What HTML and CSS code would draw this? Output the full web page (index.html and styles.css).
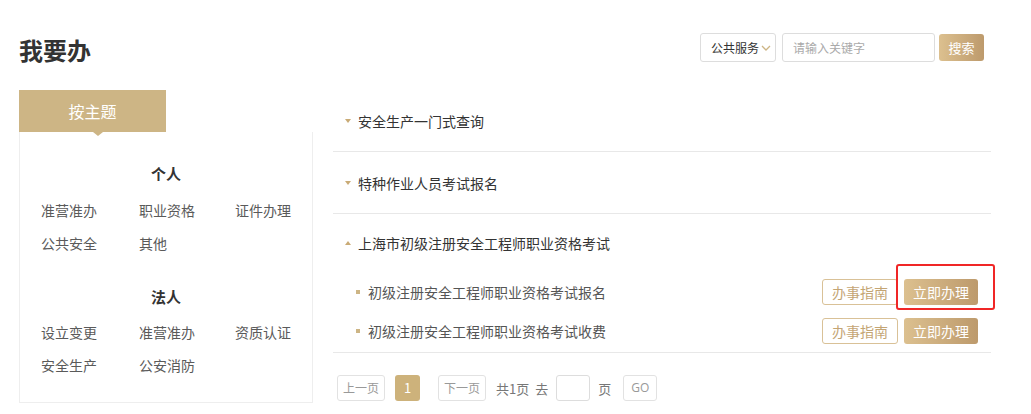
FILE: index.html
```html
<!DOCTYPE html>
<html lang="zh-CN">
<head>
    <meta charset="UTF-8">
    <meta name="viewport" content="width=device-width, initial-scale=1.0">
    <title>我要办</title>
    <link rel="stylesheet" href="styles.css">
</head>
<body>
    <div class="page">
        <div class="header">
            <h1 class="title">我要办</h1>
            <div class="search">
                <div class="search-select">
                    <span>公共服务</span>
                    <svg class="chevron" width="10" height="6" viewBox="0 0 10 6"><path d="M1 1 L5 5 L9 1" fill="none" stroke="#cdb585" stroke-width="1.3"/></svg>
                </div>
                <input class="search-input" type="text" placeholder="请输入关键字">
                <button class="search-btn">搜索</button>
            </div>
        </div>

        <div class="main">
            <div class="side">
                <div class="tabs">
                    <div class="tab active">按主题</div>
                </div>
                <div class="side-box">
                    <div class="group">
                        <div class="group-title">个人</div>
                        <div class="group-items">
                            <span>准营准办</span>
                            <span>职业资格</span>
                            <span>证件办理</span>
                            <span>公共安全</span>
                            <span>其他</span>
                        </div>
                    </div>
                    <div class="group group-second">
                        <div class="group-title">法人</div>
                        <div class="group-items">
                            <span>设立变更</span>
                            <span>准营准办</span>
                            <span>资质认证</span>
                            <span>安全生产</span>
                            <span>公安消防</span>
                        </div>
                    </div>
                </div>
            </div>

            <div class="content">
                <div class="item">
                    <div class="item-head"><span class="arrow arrow-down"></span>安全生产一门式查询</div>
                </div>
                <div class="item">
                    <div class="item-head"><span class="arrow arrow-down"></span>特种作业人员考试报名</div>
                </div>
                <div class="item open">
                    <div class="item-head item-head-open"><span class="arrow arrow-up"></span>上海市初级注册安全工程师职业资格考试</div>
                    <div class="sub-list">
                        <div class="sub-item">
                            <span class="bullet"></span>
                            <span class="sub-name">初级注册安全工程师职业资格考试报名</span>
                            <button class="btn-guide">办事指南</button>
                            <button class="btn-apply">立即办理<span class="highlight"></span></button>
                        </div>
                        <div class="sub-item">
                            <span class="bullet"></span>
                            <span class="sub-name">初级注册安全工程师职业资格考试收费</span>
                            <button class="btn-guide">办事指南</button>
                            <button class="btn-apply">立即办理</button>
                        </div>
                    </div>
                </div>

                <div class="pager">
                    <span class="pager-btn">上一页</span>
                    <span class="pager-num current">1</span>
                    <span class="pager-btn">下一页</span>
                    <span class="pager-text">共1页</span>
                    <span class="pager-text pager-goto">去</span>
                    <input class="pager-input" type="text">
                    <span class="pager-text">页</span>
                    <span class="pager-btn pager-go">GO</span>
                </div>
            </div>
        </div>
    </div>
</body>
</html>
```

FILE: styles.css
```css
* {
    box-sizing: border-box;
}

body {
    margin: 0;
    background-color: #fff;
    font-family: "Noto Sans CJK SC", "Noto Sans", sans-serif;
    color: #333;
}

.page {
    width: 991px;
    padding-left: 19px;
}

/* header */
.header {
    display: flex;
    justify-content: space-between;
    align-items: flex-start;
    height: 90px;
}

.title {
    margin: 0;
    padding-top: 36px;
    font-size: 24px;
    line-height: 28px;
    font-weight: bold;
    color: #333;
}

.search {
    display: flex;
    align-items: center;
    margin-top: 33px;
    margin-right: 7px;
}

.search-select {
    display: flex;
    align-items: center;
    justify-content: space-between;
    width: 76px;
    height: 29px;
    padding: 0 4px 0 10px;
    border: 1px solid #ddd;
    border-radius: 3px;
    font-size: 12px;
    color: #333;
    white-space: nowrap;
}

.chevron {
    margin-top: 1px;
}

.search-input {
    width: 153px;
    height: 29px;
    margin-left: 6px;
    padding: 0 10px;
    border: 1px solid #ddd;
    border-radius: 3px;
    font-family: inherit;
    font-size: 12px;
    outline: none;
}

.search-input::placeholder {
    color: #aaa;
}

.search-btn {
    width: 45px;
    height: 27px;
    margin-left: 4px;
    padding: 0;
    border: none;
    border-radius: 3px;
    background: linear-gradient(to right, #dcc08f, #bd9a6c);
    color: #fff;
    font-family: inherit;
    font-size: 13px;
}

/* main */
.main {
    display: flex;
    align-items: flex-start;
}

.side {
    width: 294px;
}

.tabs {
    display: flex;
}

.tab {
    position: relative;
    width: 147px;
    height: 42px;
    line-height: 42px;
    text-align: center;
    font-size: 16px;
    color: #fff;
    background-color: #cdb585;
}

.tab.active::after {
    content: "";
    position: absolute;
    left: 74px;
    bottom: -4px;
    border-left: 5px solid transparent;
    border-right: 5px solid transparent;
    border-top: 4px solid #cdb585;
}

.side-box {
    height: 271px;
    padding: 31px 0 0 21px;
    border: 1px solid #eee;
    border-top: none;
}

.group-title {
    margin-left: -21px;
    line-height: 22px;
    text-align: center;
    font-size: 15px;
    font-weight: bold;
    color: #333;
}

.group-items {
    display: grid;
    grid-template-columns: 98px 96px auto;
    margin-top: 9px;
    font-size: 14px;
    line-height: 33px;
    color: #5a5a5a;
}

.group-second {
    margin-top: 26px;
}

.group-second .group-items {
    margin-top: 8px;
}

/* right list */
.content {
    width: 658px;
    margin-left: 20px;
}

.item {
    border-bottom: 1px solid #e8e8e8;
}

.item-head {
    display: flex;
    align-items: center;
    height: 61px;
    padding-left: 12px;
    font-size: 14px;
    color: #333;
}

.item-head-open {
    height: 58px;
}

.arrow {
    width: 0;
    height: 0;
    margin-right: 7px;
    border-left: 3.5px solid transparent;
    border-right: 3.5px solid transparent;
}

.arrow-down {
    border-top: 4px solid #c9ab76;
}

.arrow-up {
    border-bottom: 4px solid #c9ab76;
}

.sub-list {
    padding-bottom: 2px;
}

.sub-item {
    display: flex;
    align-items: center;
    height: 39px;
    padding: 0 13px 0 23px;
}

.bullet {
    width: 4px;
    height: 4px;
    margin-right: 8px;
    background-color: #cdb585;
}

.sub-name {
    flex: 1;
    font-size: 14px;
    color: #555;
}

.btn-guide,
.btn-apply {
    height: 26px;
    padding: 0;
    border-radius: 3px;
    font-family: inherit;
    font-size: 14px;
}

.btn-guide {
    width: 76px;
    border: 1px solid #d9c197;
    background-color: #fff;
    color: #c4a574;
}

.btn-apply {
    position: relative;
    width: 74px;
    margin-left: 6px;
    border: none;
    background: linear-gradient(to right, #dcc08f, #bd9a6c);
    color: #fff;
}

/* red annotation frame */
.highlight {
    position: absolute;
    left: -8px;
    top: -15px;
    width: 99px;
    height: 46px;
    border: 2px solid #f02626;
    border-radius: 3px;
}

/* pager */
.pager {
    display: flex;
    align-items: center;
    margin-top: 22px;
    padding-left: 4px;
    font-size: 12px;
}

.pager-btn {
    width: 48px;
    height: 26px;
    line-height: 24px;
    text-align: center;
    border: 1px solid #e2e2e2;
    border-radius: 3px;
    color: #999;
}

.pager-num {
    width: 25px;
    height: 26px;
    margin: 0 18px 0 10px;
    line-height: 26px;
    text-align: center;
    border-radius: 3px;
    font-size: 13px;
}

.pager-num.current {
    background-color: #cdb27b;
    color: #fff;
}

.pager-text {
    margin-left: 10px;
    font-size: 13px;
    color: #777;
}

.pager-goto {
    margin-left: 6px;
}

.pager-input {
    width: 34px;
    height: 26px;
    margin-left: 8px;
    border: 1px solid #ddd;
    border-radius: 3px;
    outline: none;
}

.pager-input + .pager-text {
    margin-left: 8px;
}

.pager-go {
    width: 34px;
    margin-left: 12px;
    font-family: "Open Sans", sans-serif;
}
```
